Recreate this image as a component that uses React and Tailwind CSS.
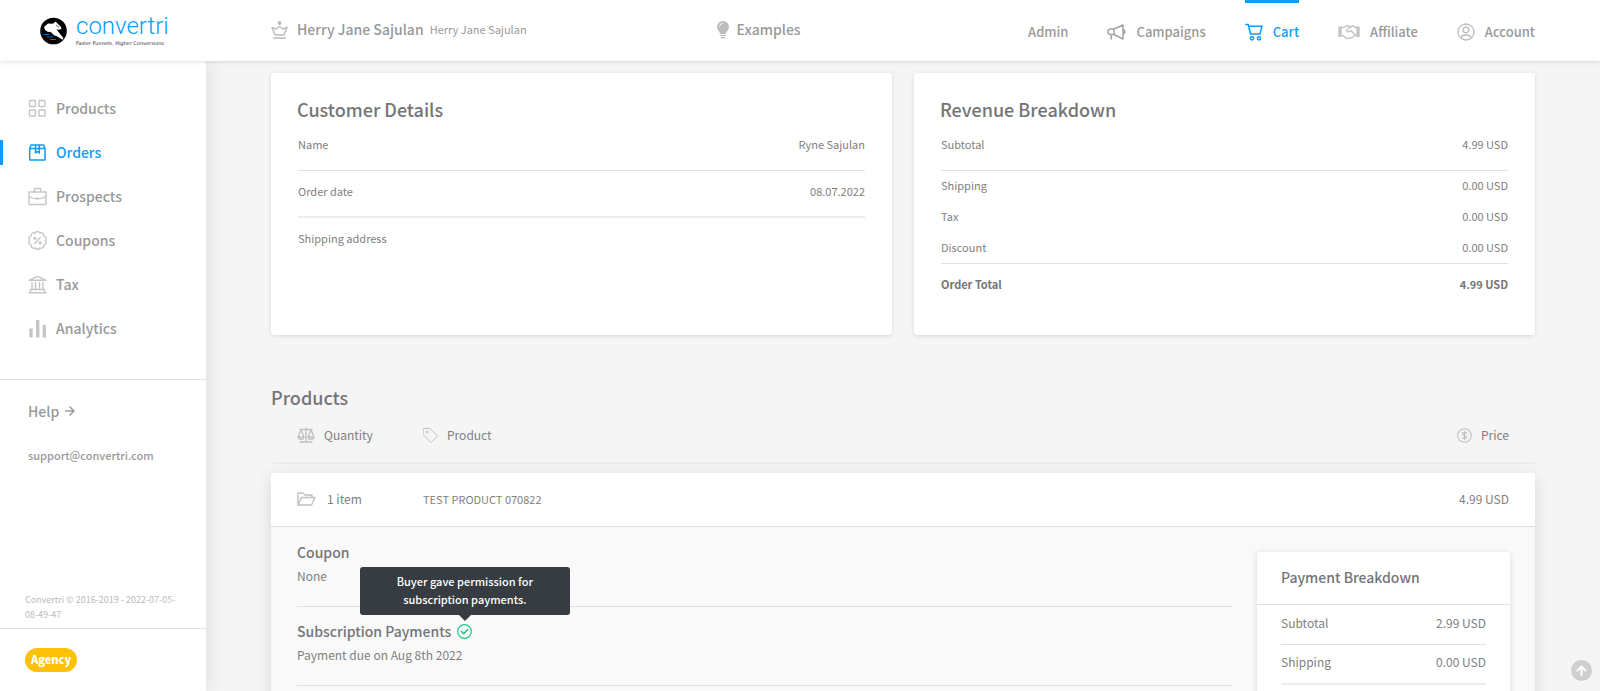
import React from 'react';

const Icon = ({ children, className, box = '0 0 24 24', stroke = 2 }) => (
  <svg viewBox={box} className={`shrink-0 ${className}`} fill="none" stroke="currentColor" strokeWidth={stroke} strokeLinejoin="round" strokeLinecap="round" aria-hidden="true">{children}</svg>
);

const CartIcon = () => (
  <Icon className="w-[18px] h-[18px]" box="0 0 18 18" stroke={1.5}><path d="M0.8 1.500h2.400l2.300 9.500h9.500l2-7.800H3.700" strokeLinejoin="miter" /><circle cx="7" cy="15.300" r="1.600" /><circle cx="14" cy="15.300" r="1.600" /></Icon>
);
const MegaphoneIcon = () => (
  <Icon className="w-[19px] h-[18px]" box="0 0 19 18" stroke={1.5}><path d="M7 6L16 2v14L7 11.500z M7 6H3.500a2.500 2.700 0 0 0 0 5.500H7 M4.200 11.500V16 M16 6.500c2.600.5 2.600 4 0 4.500" /></Icon>
);
const HandshakeIcon = () => (
  <Icon className="w-[22px] h-[16px]" box="0 0 22 16" stroke={1.4}><path d="M2 2.500v10.500 M20 2.500v10.500" strokeWidth="3.400" strokeLinecap="butt" /><path d="M4 3.500h2L8 2h3l1.500 1L14.500 2h1L17 3.500h1.500 M4 11.500h1l3 2.500c1 .8 2 .6 2.500 0 1 .6 2 .2 2.500-.5 1 .3 2 0 2.500-1l1.500-1h1.500 M12.500 3L8.500 6c0 2 2 2.500 3.500 1l1-.5 4 4.500" /></Icon>
);
const AccountIcon = () => (
  <Icon className="w-[18px] h-[18px]" box="0 0 18 18" stroke={1.3}><circle cx="9" cy="9" r="8" /><circle cx="9" cy="7" r="2.800" /><path d="M4 14.500c.5-2 1.500-2.500 5-2.500s4.500.5 5 2.500" /></Icon>
);

const NAV = [
  { label: 'Admin' },
  { label: 'Campaigns', icon: MegaphoneIcon, tone: 'text-[#a3a3a3]' },
  { label: 'Cart', icon: CartIcon, tone: 'text-[#0a9dfb]', active: true },
  { label: 'Affiliate', icon: HandshakeIcon, tone: 'text-[#c4c4c4]' },
  { label: 'Account', icon: AccountIcon, tone: 'text-[#bdbdbd]' },
];

// scalloped edge of the coupon badge
const badgePoint = (i) => `${(9.5 + 7.8 * Math.sin((i * Math.PI) / 5)).toFixed(2)} ${(9.5 - 7.8 * Math.cos((i * Math.PI) / 5)).toFixed(2)}`;
const BADGE = `M${badgePoint(0.5)} ${[1.5, 2.5, 3.5, 4.5, 5.5, 6.5, 7.5, 8.5, 9.5, 10.5].map((i) => `A2.7 2.7 0 0 1 ${badgePoint(i)}`).join(' ')}z`;

const SIDE = [
  { label: 'Products', d: <g strokeWidth="1.400"><rect x="1.500" y="1.500" width="6" height="6" rx="0.500" /><rect x="11" y="1.500" width="6" height="6" rx="0.500" /><rect x="1.500" y="11" width="6" height="6" rx="0.500" /><rect x="11" y="11" width="6" height="6" rx="0.500" /></g> },
  { label: 'Orders', active: true, d: <path d="M1.700 5.500L3 2h12.700L17 5.500V17H1.700z M1.700 5.500H17 M7.500 2v8l1.900-1.500L11.300 10V2" strokeWidth="1.500" /> },
  { label: 'Prospects', d: <path d="M1 5h17v12.500H1z M6.500 5V1.500h6V5 M1 9.500c3 2 6 2.300 8.500 2.300s5.500-.3 8.500-2.300 M9.500 11v1.500" /> },
  { label: 'Coupons', d: <g><path d={BADGE} /><path d="M12.300 6.500l-5.500 6" /><circle cx="7" cy="7.300" r=".9" /><circle cx="12.200" cy="11.800" r=".9" /></g> },
  { label: 'Tax', d: <path d="M1 5.300L9.500 1.300l8.500 4z M4 7.500v6.500 M7.500 7.500v6.500 M11.500 7.500v6.500 M15 7.500v6.500 M2.500 14.500h14v3 M2.500 14.500v3 M.8 17.700h17.400" /> },
  { label: 'Analytics', d: <path d="M3 18.500V9.500 M9.700 18.500V1 M16.300 18.500V6" strokeWidth="3.400" strokeLinecap="butt" /> },
];

const Logo = () => (
  <a href="#" className="flex items-center w-[232px] pl-10 shrink-0">
    <svg viewBox="0 0 27 27" className="w-[27px] h-[28px] shrink-0" aria-hidden="true">
      <circle cx="13.500" cy="13.500" r="13.300" fill="#000" />
      <path d="M4 9.500L8 6l5 .3L15.500 4l1.500 1.500 4 4 .5 2-3 .8-2-.5 3 4 4 5-1 1.500-5.500-3.500-3-1-3.500-3.500-2.500.2-3-2z" fill="#fff" />
      <path d="M16 7.500l3 2.500" stroke="#000" strokeWidth=".6" />
      <path d="M3.500 17h6 M6.500 19.500h6 M10 22h6" stroke="#0a6fc0" strokeWidth="1.200" />
    </svg>
    <span className="flex flex-col pl-[9px] pb-1">
      <span className="font-['Roboto'] font-light text-[24px] leading-[28px] text-[#0a9dfb]">convertri</span>
      <span className="font-['DejaVu_Sans'] text-[5px] leading-[6px] text-[#333]">Faster Funnels, Higher Conversions</span>
    </span>
  </a>
);

const Header = () => (
  <header className="relative z-20 flex h-[61px] bg-white shadow-[0_0_5px_rgba(0,0,0,0.18)]">
    <Logo />
    <div className="flex flex-1 items-center pl-[39px] pb-[2px] text-[#999]">
      <Icon className="w-[17px] h-[18px] text-[#bbb]" box="0 0 17 18" stroke={1.4}><circle cx="8.500" cy="2" r="1.900" fill="currentColor" stroke="none" /><path d="M1 6.500L4 14h9l3-7.500-4 1.500-3.500-2.500L5 8z M2.500 17h12" /></Icon>
      <span className="pl-[9px] text-[14px] font-medium">Herry Jane Sajulan</span>
      <span className="pl-[6px] text-[11px]">Herry Jane Sajulan</span>
      <svg viewBox="0 0 12 18" className="ml-[190px] w-3 h-[18px] text-[#bdbdbd]" fill="currentColor" aria-hidden="true"><path d="M6 0a6 6 0 0 1 6 6c0 3-3 4.500-3 7H3c0-2.500-3-4-3-7a6 6 0 0 1 6-6z M3 14h6v1H3z M3.500 16h5l-1 1.500h-3z" /><path d="M2.500 5.500A3.500 3.500 0 0 1 6 2.500" stroke="#fff" fill="none" /></svg>
      <span className="pl-2 text-[14px] font-medium">Examples</span>
    </div>
    <nav className="flex gap-[39px] pr-[65px]">
      {NAV.map(({ label, icon: NavIcon, tone, active }) => (
        <a key={label} href="#" className={active ? 'flex items-center gap-[10px] border-t-[3px] border-[#0a9dfb] text-[#0a9dfb] text-[13px] font-medium' : 'flex items-center gap-[10px] border-t-[3px] border-transparent text-[#999] text-[13px] font-medium'}>
          {NavIcon && <span className={tone}><NavIcon /></span>}
          {label}
        </a>
      ))}
    </nav>
  </header>
);

const Sidebar = () => (
  <aside className="relative z-10 flex flex-col w-[206px] shrink-0 bg-white shadow-[0_0_20px_rgba(0,0,0,0.12)] text-[#999]">
    <nav className="flex flex-col pt-[25px] pb-[29px] border-b border-[#e0e0e0]">
      {SIDE.map(({ label, d, active }) => (
        <a key={label} href="#" className={active ? 'flex items-center h-11 text-[14px] font-medium text-[#0a9dfb]' : 'flex items-center h-11 text-[14px] font-medium'}>
          <span className={active ? 'w-[3px] h-[25px] bg-[#0a9dfb]' : 'w-[3px]'} />
          <span className={active ? 'pl-[25px]' : 'pl-[25px] text-[#c6c6c6]'}><Icon className="w-[19px] h-[19px]" box="0 0 19 19" stroke={1.4}>{d}</Icon></span>
          <span className="pl-[9px]">{label}</span>
        </a>
      ))}
    </nav>
    <div className="flex flex-col pl-7 pt-[21px] font-medium">
      <a href="#" className="flex items-center gap-[6px] text-[14px] leading-5">Help <Icon className="w-[10px] h-[10px]" box="0 0 10 10" stroke={1.5}><path d="M.8 5h8 M5 1l4 4-4 4" /></Icon></a>
      <a href="mailto:support@convertri.com" className="pt-6 text-[11px] leading-5">support@convertri.com</a>
    </div>
    <p className="mt-auto pl-[25px] pr-5 pb-[6px] text-[9px] leading-[15px] text-[#bbb]">Convertri © 2016-2019 - 2022-07-05-08-49-47</p>
    <div className="flex h-[63px] pl-[25px] pt-[19px] border-t border-[#e0e0e0]"><span className="h-6 px-[6px] rounded-full bg-[#ffc107] text-white font-black text-[11px] leading-[23px]">Agency</span></div>
  </aside>
);

const Row = ({ label, value, className }) => (
  <div className={`flex items-center justify-between ${className}`}><dt>{label}</dt><dd>{value}</dd></div>
);

const Card = ({ title, children }) => (
  <section className="flex-1 min-h-[262px] bg-white rounded-[3px] shadow-[0_1px_4px_rgba(0,0,0,0.12)] px-[26px] pt-[23px]">
    <h2 className="text-[18px] leading-[26px] font-medium text-[#757575]">{title}</h2>
    <dl className="px-px pt-px text-[11px] leading-[18px] text-[#808080]">{children}</dl>
  </section>
);

const Detail = ({ title, children, text }) => (
  <div className="border-b border-[#e0e0e0] h-[79px] pt-3">
    <h3 className="flex items-center gap-[6px] text-[14px] leading-6 font-medium text-[#757575]">{title}{children}</h3>
    <p className="text-[12px] leading-6">{text}</p>
  </div>
);

const Tooltip = () => (
  <span role="tooltip" className="absolute bottom-full left-1/2 -translate-x-1/2 mb-[9px] w-[210px] h-[48px] pt-[5px] rounded-[3px] bg-[#363c41] text-white text-center text-[11px] leading-[18px]">
    Buyer gave permission for<br />subscription payments.
    <span className="absolute top-full left-1/2 -translate-x-1/2 border-x-[6px] border-t-[6px] border-x-transparent border-t-[#363c41]" />
  </span>
);

const ProductsTable = () => (
  <section className="pt-[50px]">
    <h2 className="text-[18px] leading-6 font-medium text-[#757575]">Products</h2>
    <div className="grid grid-cols-[126px_1fr_auto] px-[26px] h-[55px] pb-px mb-[9px] border-b-2 border-[#ebebeb] items-center text-[12px]">
      <span className="flex items-center gap-[9px]"><Icon className="w-[18px] h-[16px] text-[#c0c0c0]" box="0 0 18 16" stroke={1.3}><path d="M9 1v13 M3 2.500h12 M3 15h12 M4 3L1 10h6z M14 3l-3 7h6z M1 10c0 3 6 3 6 0 M11 10c0 3 6 3 6 0" /></Icon>Quantity</span>
      <span className="flex items-center gap-[9px]"><Icon className="w-[15px] h-[15px] text-[#c0c0c0]" box="0 0 15 15" stroke={1}><path d="M.5 .5h6.500l7.500 7.500-6.500 6.500L.5 7z" /><circle cx="4" cy="4" r="1" /></Icon>Product</span>
      <span className="flex items-center gap-[9px]"><Icon className="w-[15px] h-[15px] text-[#c0c0c0]" box="0 0 15 15" stroke={1.1}><circle cx="7.500" cy="7.500" r="6.800" /><path d="M9.700 5.300c-1-1.300-4.400-1.300-4.400.5s4.400 1.500 4.400 3.300-3.400 1.800-4.400.5 M7.500 3.300v8.400" /></Icon>Price</span>
    </div>
    <div className="bg-[#f9f9f9] rounded-[3px] shadow-[0_4px_16px_rgba(0,0,0,0.12)]">
      <div className="grid grid-cols-[126px_1fr_auto] items-center px-[26px] h-[54px] pb-px bg-white rounded-t-[3px] border-b border-[#e0e0e0] text-[12px]">
        <span className="flex items-center gap-[11px]"><Icon className="w-[19px] h-[14px] text-[#c0c0c0]" box="0 0 19 14" stroke={1.4}><path d="M1 13V1h5l2 2h7v2.500 M1 13l3.500-7.500H18L14.500 13z" /></Icon>1 item</span>
        <span className="text-[11px]">TEST PRODUCT 070822</span>
        <span>4.99 USD</span>
      </div>
      <div className="flex items-start gap-[25px] pl-[26px] pr-[25px] pb-10">
        <div className="flex-1 pt-px">
          <Detail title="Coupon" text="None" />
          <Detail title="Subscription Payments" text="Payment due on Aug 8th 2022">
            <button type="button" aria-label="Permission granted" className="relative text-[#18c48f] font-medium">
              <Icon className="w-[15px] h-[15px]" box="0 0 15 15" stroke={1.2}><circle cx="7.500" cy="7.500" r="6.800" /><path d="M4.500 7.500l2.300 2.300 4-4.300" strokeWidth="1.500" /></Icon>
              <Tooltip />
            </button>
          </Detail>
        </div>
        <div className="w-[253px] mt-[25px] pb-10 bg-white rounded-[3px] shadow-[0_1px_6px_rgba(0,0,0,0.12)]">
          <h3 className="h-[53px] px-6 border-b border-[#e0e0e0] text-[14px] leading-[50px] font-medium text-[#757575]">Payment Breakdown</h3>
          <dl className="px-6 text-[12px]">
            <Row label="Subtotal" value="2.99 USD" className="h-10 pb-1 border-b border-[#e0e0e0]" />
            <Row label="Shipping" value="0.00 USD" className="h-10 pb-1 border-b-2 border-[#ededed]" />
          </dl>
        </div>
      </div>
    </div>
  </section>
);

const App = () => (
  <div className="flex flex-col h-screen overflow-hidden bg-[#f5f5f5] font-['Noto_Sans_CJK_SC',sans-serif] text-[#808080]">
    <Header />
    <div className="flex flex-1 min-h-0">
      <Sidebar />
      <main className="flex-1 overflow-hidden pl-[65px] pr-[65px] pt-3">
        <div className="flex gap-[22px]">
          <Card title="Customer Details">
            <Row label="Name" value="Ryne Sajulan" className="h-12 pb-[5px] border-b border-[#e0e0e0]" />
            <Row label="Order date" value="08.07.2022" className="h-[47px] pb-[5px] border-b-2 border-[#ededed]" />
            <Row label="Shipping address" value="" className="h-10" />
          </Card>
          <Card title="Revenue Breakdown">
            <Row label="Subtotal" value="4.99 USD" className="h-12 pb-[5px] border-b border-[#e0e0e0]" />
            <Row label="Shipping" value="0.00 USD" className="h-[31px] pb-[3px]" />
            <Row label="Tax" value="0.00 USD" className="h-[31px] pb-[3px]" />
            <Row label="Discount" value="0.00 USD" className="h-[31px] pb-[2px] border-b border-[#e0e0e0]" />
            <Row label="Order Total" value="4.99 USD" className="h-[42px] pb-[2px] font-bold text-[#757575]" />
          </Card>
        </div>
        <ProductsTable />
      </main>
    </div>
    <button type="button" aria-label="Back to top" className="absolute z-30 right-2 bottom-[10px] flex items-center justify-center w-[21px] h-[21px] rounded-full bg-[#cfcfcf] text-white">
      <Icon className="w-[11px] h-[11px]" box="0 0 11 11" stroke={2}><path d="M5.500 10V1.500 M1.500 5.500l4-4 4 4" /></Icon>
    </button>
  </div>
);

export default App;
